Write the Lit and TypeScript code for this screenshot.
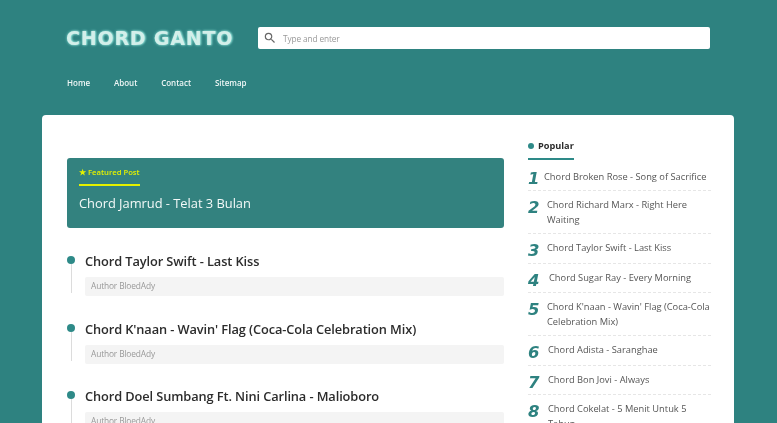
import { LitElement, html, css } from "lit";
import { customElement } from "lit/decorators.js";

const posts = ["Chord Taylor Swift - Last Kiss", "Chord K'naan - Wavin' Flag (Coca-Cola Celebration Mix)", "Chord Doel Sumbang Ft. Nini Carlina - Malioboro"];
const popular = [
  { t: "Chord Broken Rose - Song of Sacrifice", w: 16 },
  { t: "Chord Richard Marx - Right Here\nWaiting", w: 19 },
  { t: "Chord Taylor Swift - Last Kiss", w: 19 },
  { t: "Chord Sugar Ray - Every Morning", w: 21 },
  { t: "Chord K'naan - Wavin' Flag (Coca-Cola\nCelebration Mix)", w: 19 },
  { t: "Chord Adista - Saranghae", w: 20 },
  { t: "Chord Bon Jovi - Always", w: 20 },
  { t: "Chord Cokelat - 5 Menit Untuk 5\nTahun", w: 20 },
];

@customElement("app-root")
export class AppRoot extends LitElement {
  static styles = css`
    :host { display: block; box-sizing: border-box; height: 423px; padding-top: 27px; overflow: hidden; background: #2e8280; font-family: "Open Sans", sans-serif; filter: blur(0.35px); }
    * { box-sizing: border-box; }
    .top { display: flex; align-items: center; padding: 0 67px 0 66px; height: 22px; }
    .logo { width: 192px; font-size: 19px; font-weight: 700; letter-spacing: .8px; color: #d3efea; text-shadow: 0 0 3px #7fd8cf, 1px 0 2px #9be3da; white-space: nowrap; font-family: "DejaVu Sans", sans-serif; }
    .search { flex: 1; height: 22px; background: #fff; border-radius: 2px; display: flex; align-items: center; padding-left: 5px; gap: 6px; color: #999; font-size: 8.3px; letter-spacing: -.12px; }
    .search svg { width: 14px; height: 14px; fill: #666; }
    .nav { display: flex; gap: 23.8px; padding: 28px 0 0 67px; height: 66px; color: #eef6f5; font-size: 8px; font-weight: 600; line-height: 12px; }
    .card { margin: 0 43px 0 42px; background: #fff; border-radius: 4px; padding: 23px 23px 0 25px; display: flex; gap: 24px; height: 400px; }
    .main { width: 437px; flex: none; padding-top: 20px; }
    .feat { height: 70px; background: #33827f; border-radius: 3px; padding: 8px 12px; color: #fff; }
    .flabel { width: fit-content; font-size: 7.7px; font-weight: 600; color: #e4f200; line-height: 12px; padding-bottom: 5.5px; border-bottom: 2px solid #e4f200; }
    .ftitle { font-size: 12.9px; font-weight: 500; letter-spacing: -.03px; line-height: 18px; margin-top: 8.5px; color: #f3f9f8; }
    .posts { display: flex; flex-direction: column; gap: 22.5px; margin-top: 23px; }
    .post { display: flex; height: 45px; }
    .mark { width: 18px; flex: none; }
    .dot { width: 8px; height: 8px; border-radius: 50%; background: #2e8a88; margin-top: 5px; }
    .line { width: 1px; height: 29px; background: #dcdcdc; margin: 0 0 0 3.5px; }
    .body { flex: 1; }
    .ptitle { font-size: 12.8px; font-weight: 600; letter-spacing: -.1px; color: #2c2c2c; line-height: 20px; white-space: nowrap; }
    .meta { margin-top: 6px; height: 19px; background: #f4f4f4; border-radius: 2px; padding-left: 6px; color: #999; font-size: 8.4px; letter-spacing: -.15px; line-height: 18px; }
    .side { width: 183px; flex: none; }
    .phead { display: flex; align-items: center; gap: 4px; height: 22px; width: 46px; white-space: nowrap; font-size: 9.2px; font-weight: 700; color: #2c2c2c; border-bottom: 2px solid #2e8a88; padding-bottom: 5px; }
    .phead i { width: 6px; height: 6px; border-radius: 50%; background: #2e8a88; flex: none; }
    ul { list-style: none; margin: 1.5px 0 0; padding: 0; }
    li { display: flex; align-items: flex-start; padding: 6px 0; border-bottom: 1px dashed #e6e6e6; }
    li:first-child .t { margin-top: 1px; }
    .n { flex: none; font: italic 700 16.5px/17px "DejaVu Sans", sans-serif; color: #2e8280; height: 16.5px; padding-top: 2px; }
    .t { font-size: 9.3px; line-height: 15px; color: #555; white-space: pre; }
  `;
  render() {
    return html`
      <div class="top">
        <div class="logo">CHORD GANTO</div>
        <div class="search">
          <svg viewBox="0 0 24 24"><path d="M15.5 14h-.79l-.28-.27A6.47 6.47 0 0 0 16 9.5 6.5 6.5 0 1 0 9.5 16c1.61 0 3.09-.59 4.23-1.57l.27.28v.79l5 4.99L20.49 19l-4.99-5zm-6 0C7.01 14 5 11.99 5 9.5S7.01 5 9.5 5 14 7.01 14 9.5 11.99 14 9.5 14z"/></svg>
          <span>Type and enter</span>
        </div>
      </div>
      <div class="nav"><span>Home</span><span>About</span><span>Contact</span><span>Sitemap</span></div>
      <div class="card">
        <div class="main">
          <div class="feat">
            <div class="flabel">★ Featured Post</div>
            <div class="ftitle">Chord Jamrud - Telat 3 Bulan</div>
          </div>
          <div class="posts">
            ${posts.map(p => html`<div class="post">
              <div class="mark"><div class="dot"></div><div class="line"></div></div>
              <div class="body"><div class="ptitle">${p}</div><div class="meta">Author BloedAdy</div></div>
            </div>`)}
          </div>
        </div>
        <div class="side">
          <div class="phead"><i></i>Popular</div>
          <ul>${popular.map((p, i) => html`<li><span class="n" style="width:${p.w}px">${i + 1}</span><span class="t">${p.t}</span></li>`)}</ul>
        </div>
      </div>
    `;
  }
}
